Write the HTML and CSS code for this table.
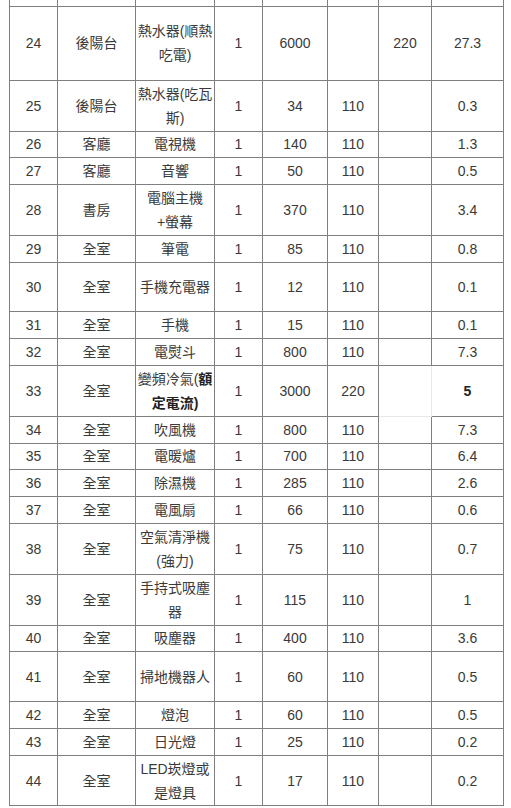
FILE: index.html
```html
<!DOCTYPE html>
<html lang="zh-Hant">
<head>
<meta charset="utf-8">
<title>家電用電表</title>
<link rel="stylesheet" href="styles.css">
</head>
<body>
<div class="wrap">
<table class="power">
<colgroup>
<col class="c1"><col class="c2"><col class="c3"><col class="c4"><col class="c5"><col class="c6"><col class="c7"><col class="c8">
</colgroup>
<tbody>
<tr class="stub"><td></td><td></td><td></td><td></td><td></td><td></td><td></td><td></td></tr>
<tr class="h3"><td>24</td><td>後陽台</td><td>熱水器(順熱<br>吃電)</td><td>1</td><td>6000</td><td></td><td>220</td><td>27.3</td></tr>
<tr><td>25</td><td>後陽台</td><td>熱水器(吃瓦<br>斯)</td><td>1</td><td>34</td><td>110</td><td></td><td>0.3</td></tr>
<tr><td>26</td><td>客廳</td><td>電視機</td><td>1</td><td>140</td><td>110</td><td></td><td>1.3</td></tr>
<tr><td>27</td><td>客廳</td><td>音響</td><td>1</td><td>50</td><td>110</td><td></td><td>0.5</td></tr>
<tr><td>28</td><td>書房</td><td>電腦主機<br>+螢幕</td><td>1</td><td>370</td><td>110</td><td></td><td>3.4</td></tr>
<tr><td>29</td><td>全室</td><td>筆電</td><td>1</td><td>85</td><td>110</td><td></td><td>0.8</td></tr>
<tr class="h2"><td>30</td><td>全室</td><td>手機充電器</td><td>1</td><td>12</td><td>110</td><td></td><td>0.1</td></tr>
<tr><td>31</td><td>全室</td><td>手機</td><td>1</td><td>15</td><td>110</td><td></td><td>0.1</td></tr>
<tr><td>32</td><td>全室</td><td>電熨斗</td><td>1</td><td>800</td><td>110</td><td></td><td>7.3</td></tr>
<tr><td>33</td><td>全室</td><td>變頻冷氣(<b>額<br>定電流)</b></td><td>1</td><td>3000</td><td>220</td><td class="open"></td><td><b>5</b></td></tr>
<tr><td>34</td><td>全室</td><td>吹風機</td><td>1</td><td>800</td><td>110</td><td></td><td>7.3</td></tr>
<tr><td>35</td><td>全室</td><td>電暖爐</td><td>1</td><td>700</td><td>110</td><td></td><td>6.4</td></tr>
<tr><td>36</td><td>全室</td><td>除濕機</td><td>1</td><td>285</td><td>110</td><td></td><td>2.6</td></tr>
<tr><td>37</td><td>全室</td><td>電風扇</td><td>1</td><td>66</td><td>110</td><td></td><td>0.6</td></tr>
<tr><td>38</td><td>全室</td><td>空氣清淨機<br>(強力)</td><td>1</td><td>75</td><td>110</td><td></td><td>0.7</td></tr>
<tr><td>39</td><td>全室</td><td>手持式吸塵<br>器</td><td>1</td><td>115</td><td>110</td><td></td><td>1</td></tr>
<tr><td>40</td><td>全室</td><td>吸塵器</td><td>1</td><td>400</td><td>110</td><td></td><td>3.6</td></tr>
<tr class="h2"><td>41</td><td>全室</td><td>掃地機器人</td><td>1</td><td>60</td><td>110</td><td></td><td>0.5</td></tr>
<tr><td>42</td><td>全室</td><td>燈泡</td><td>1</td><td>60</td><td>110</td><td></td><td>0.5</td></tr>
<tr><td>43</td><td>全室</td><td>日光燈</td><td>1</td><td>25</td><td>110</td><td></td><td>0.2</td></tr>
<tr><td>44</td><td>全室</td><td>LED崁燈或<br>是燈具</td><td>1</td><td>17</td><td>110</td><td></td><td>0.2</td></tr>
</tbody>
</table>
</div>
</body>
</html>
```

FILE: styles.css
```css
html, body {
  margin: 0;
  padding: 0;
  background: #ffffff;
}

.wrap {
  padding: 0 0 0 9px;
}

.power {
  border-collapse: collapse;
  table-layout: fixed;
  width: 494px;
  font-family: "Liberation Sans", Arial, "Noto Sans CJK TC", sans-serif;
  font-size: 14px;
  color: #3a3a3a;
}

.c1 { width: 48px; }
.c2 { width: 78px; }
.c3 { width: 79px; }
.c4 { width: 48px; }
.c5 { width: 65px; }
.c6 { width: 51px; }
.c7 { width: 53px; }
.c8 { width: 72px; }

.power td {
  border: 1px solid #7f7f7f;
  text-align: center;
  vertical-align: middle;
  line-height: 24px;
  padding: 0.9px 1px;
  word-break: break-all;
}

.power .stub td {
  border-top: none;
  height: 6px;
  line-height: 0;
  padding: 0;
}

.power .h2 td {
  height: 47px;
}

.power .h3 td {
  height: 71px;
}

.power td.open {
  border-right-color: #e8e8e8;
  border-bottom-color: #e8e8e8;
}

.power b {
  font-weight: bold;
  color: #222222;
}
```
